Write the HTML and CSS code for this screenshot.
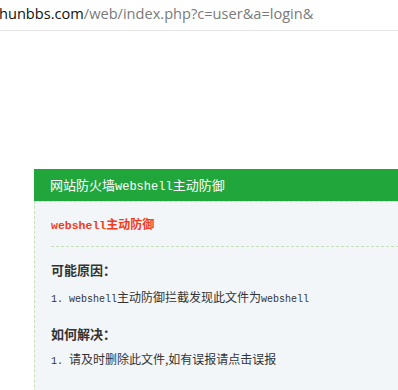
FILE: index.html
```html
<!DOCTYPE html>
<html lang="zh-CN">
<head>
  <meta charset="UTF-8">
  <meta name="viewport" content="width=device-width, initial-scale=1.0">
  <link rel="stylesheet" href="styles.css">
  <title>网站防火墙</title>
</head>
<body>
  <div class="address-bar">
    <span class="host">hunbbs.com</span><span class="path">/web/index.php?c=user&amp;a=login&amp;</span>
  </div>

  <div class="panel">
    <div class="panel-head">网站防火墙<span class="en">webshell</span>主动防御</div>
    <div class="panel-body">
      <div class="alert-title"><span class="en">webshell</span>主动防御</div>
      <div class="section-title">可能原因：</div>
      <div class="item"><span class="en">1. webshell</span>主动防御拦截发现此文件为<span class="en">webshell</span></div>
      <div class="section-title second">如何解决：</div>
      <div class="item last"><span class="en">1. </span>请及时删除此文件,如有误报请点击误报</div>
    </div>
  </div>
</body>
</html>
```

FILE: styles.css
```css
body {
  margin: 0;
  overflow: hidden;
  background: #fff;
  font-family: "Noto Sans CJK SC", sans-serif;
}

.en {
  font-family: "Liberation Mono", monospace;
}

.address-bar {
  height: 30px;
  line-height: 26px;
  border-bottom: 1px solid #e6e6e6;
  font-family: "Open Sans", "Noto Sans", sans-serif;
  font-size: 14.6px;
  white-space: nowrap;
  margin-left: -1px;
}

.host {
  color: #111;
}

.path {
  color: #7a7a7a;
}

.panel {
  margin: 138px 0 0 34px;
  width: 600px;
}

.panel-head {
  height: 32px;
  line-height: 32px;
  padding-left: 16px;
  background: #21a63b;
  color: #fff;
  font-size: 13px;
}

.panel-head .en {
  font-size: 12px;
}

.panel-body {
  background: #f2f6f9;
  border-top: 1px dashed #c8e0b8;
  border-left: 1px dashed #c8e0b8;
  padding: 12px 0 60px 16px;
}

.alert-title {
  line-height: 20px;
  padding-bottom: 10px;
  border-bottom: 1px dashed #c8e0b8;
  color: #f43a1a;
  font-size: 12px;
  font-weight: bold;
}

.alert-title .en {
  font-size: 11.5px;
}

.section-title {
  margin-top: 13px;
  line-height: 20px;
  color: #333;
  font-size: 13px;
  font-weight: bold;
}

.section-title.second {
  margin-top: 14px;
}

.item {
  margin-top: 7px;
  line-height: 20px;
  color: #333;
  font-size: 12px;
}

.item .en {
  font-size: 10px;
}

.item.last {
  margin-top: 5px;
}
```
